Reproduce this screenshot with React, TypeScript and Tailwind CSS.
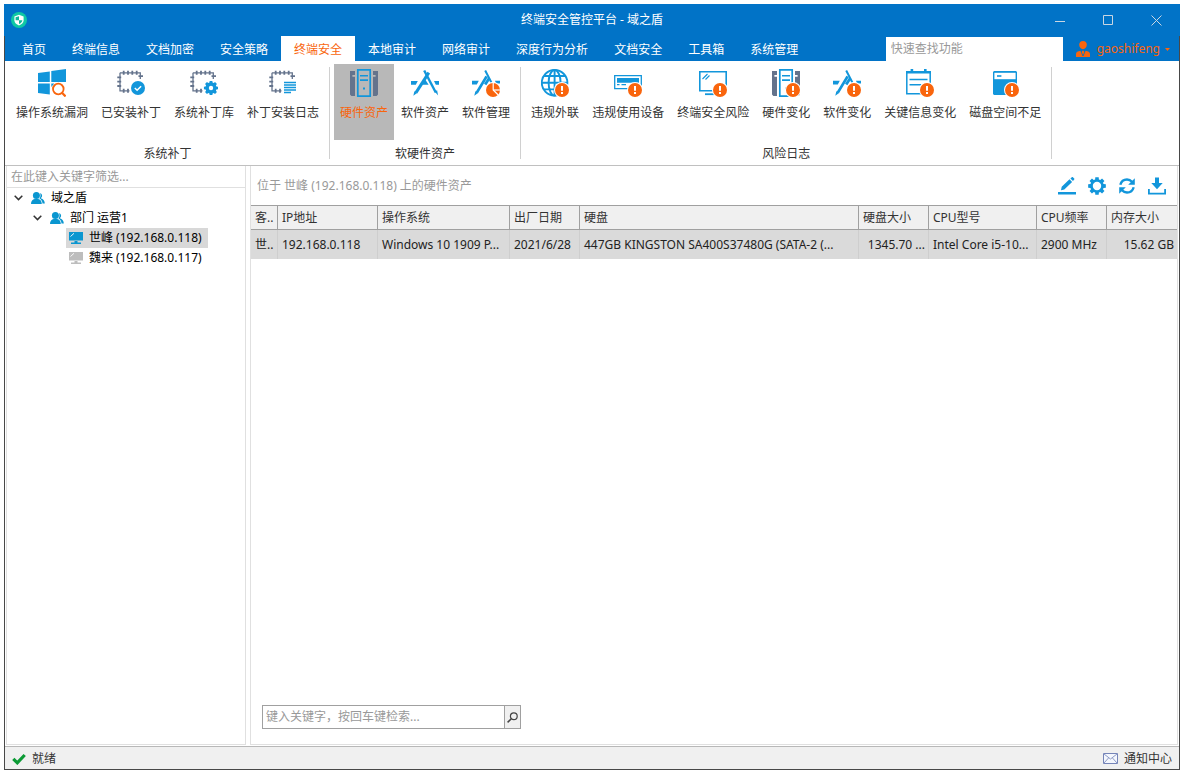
import type { ReactNode } from 'react';

const BLUE = '#1296db';
const GREY = '#64738c';
const ORANGE = '#f9650d';

/* ---------- Icon pieces ---------- */

const Icon = ({ children }: { children: ReactNode }) => (
  <svg viewBox="0 0 28 28" className="w-7 h-7" fill="none" aria-hidden="true">
    {children}
  </svg>
);

const AlertBadge = () => (
  <>
    <circle cx="21" cy="21" r="8" fill="#fff" />
    <circle cx="21" cy="21" r="7" fill={ORANGE} />
    <path d="M20 17h2v4.7h-2zM20 23h2v1.9h-2z" fill="#fff" />
  </>
);

const gearPath = (cx: number, cy: number, r: number, inner: number) => {
  const points: string[] = [];
  for (let i = 0; i < 8; i++) {
    const base = (i * Math.PI) / 4;
    [[-0.28, inner], [-0.19, r], [0.19, r], [0.28, inner]].forEach(([a, d]) => {
      points.push(`${(cx + d * Math.cos(base + a)).toFixed(2)} ${(cy + d * Math.sin(base + a)).toFixed(2)}`);
    });
  }
  return `M${points.join('L')}Z`;
};

const Chip = ({ children }: { children: ReactNode }) => (
  <Icon>
    <path d="M3 3.8H23.3V10M3 3.8V21.8H12.5" stroke={GREY} strokeWidth="1.3" />
    <path
      d="M6.7 1.8v4M11 1.8v4M15.3 1.8v4M19.7 1.8v4M6.7 19.8v4M11 19.8v4M.3 8.3h3.9M.3 12.7h3.9M.3 17h3.9M21.5 7.2H26"
      stroke={GREY}
      strokeWidth="1.8"
    />
    {children}
  </Icon>
);

const Servers = () => (
  <>
    <path d="M0 2h5v4H2.4v1.8H5V27H1.4L0 25.6zM28 2h-5v4h2.6v1.8H23V27h3.6l1.4-1.4z" fill={GREY} />
    <path d="M7.8.8h12.4v26.4H7.8z" stroke={BLUE} strokeWidth="1.7" />
    <path d="M10 6h8v1.6h-8zM10 10.3h8v1.6h-8zM13 18.6h2v2h-2z" fill={BLUE} />
  </>
);

const Tools = () => (
  <>
    <path d="M0 12h6.8l-2 3.8H0zM23 12h5v3.8h-3.2zM13.6 9.5l4 6.3H10z" fill={BLUE} />
    <path d="M17.8 3.6L5 23.6" stroke={BLUE} strokeWidth="3" />
    <path d="M3.4 22.3l2.8 1.8-3.9 2.6z" fill={BLUE} />
    <path d="M13.2 1.5l11.6 22" stroke={BLUE} strokeWidth="2.4" />
    <path d="M23.6 22.4l2.5-1.2 1 5.4z" fill={BLUE} />
  </>
);

const CutTools = () => (
  <>
    <path d="M0 11.8h6.8l-2 3.8H0zM23 11.8h5v2.6h-4z" fill={BLUE} />
    <path d="M14.6 7.4L4.8 23.6M17.2 9.2l-4 6.4" stroke={BLUE} strokeWidth="2.8" />
    <path d="M3.3 22.3l2.8 1.8-3.8 2.7z" fill={BLUE} />
    <path d="M13.2 1.5l6.2 12" stroke={BLUE} strokeWidth="2" />
  </>
);

const WindowsSearch = () => (
  <Icon>
    <path d="M0 3.9L11.8 2.5V13H0zM13.3 2.1L28 0v13H13.3zM0 14.6h11.8v10.8L0 24.1zM13.3 14.6h3l-3 3.4z" fill={BLUE} />
    <circle cx="20.3" cy="20" r="5.3" stroke={ORANGE} strokeWidth="1.8" />
    <path d="M24 23.8l3.6 3.7" stroke={ORANGE} strokeWidth="2.2" />
  </Icon>
);

const ChipCheck = () => (
  <Chip>
    <circle cx="21" cy="19" r="7" fill={BLUE} />
    <path d="M17.8 19l2.3 2.2 4-4" stroke="#fff" strokeWidth="1.5" />
  </Chip>
);

const ChipGear = () => (
  <Chip>
    <path d={gearPath(21, 19, 7.2, 5.6)} fill={BLUE} />
    <circle cx="21" cy="19" r="2.2" fill="#fff" />
  </Chip>
);

const ChipList = () => (
  <Chip>
    <path d="M15 13.5h12M15 16h12M15 18.5h12M15 21h12M15 23.5h7" stroke={BLUE} strokeWidth="1.4" />
  </Chip>
);

const Hardware = () => (
  <Icon>
    <Servers />
  </Icon>
);

const Software = () => (
  <Icon>
    <Tools />
  </Icon>
);

const SoftwareManage = () => (
  <Icon>
    <CutTools />
    <circle cx="21" cy="21" r="8" fill="#fff" />
    <circle cx="21" cy="21" r="7" fill={ORANGE} />
    <path d="M21.2 14v7l5 5" stroke="#fff" strokeWidth="1.2" />
    <path d="M21.2 21H28" stroke="#fff" strokeWidth="1.2" />
  </Icon>
);

const Globe = () => (
  <Icon>
    <g stroke={BLUE} strokeWidth="1.9">
      <circle cx="13.6" cy="13.8" r="12.8" />
      <ellipse cx="13.6" cy="13.8" rx="6" ry="12.8" />
      <path d="M13.6 1v25.6M1 13.8h25.2M3 7h21.2M3 20.4h21.2" />
    </g>
    <AlertBadge />
  </Icon>
);

const Device = () => (
  <Icon>
    <path d="M.7 6.7h26.6v13H.7z" stroke={BLUE} strokeWidth="1.3" />
    <path d="M3 9h22v4.8H3zM3 15h2.5v1.2H3zM7.5 15H12v1.2H7.5z" fill={BLUE} />
    <AlertBadge />
  </Icon>
);

const Screen = () => (
  <Icon>
    <path d="M.8 2.8h26.4v19H.8z" stroke={BLUE} strokeWidth="1.6" />
    <path d="M3.5 10l5-5M6.5 10.5l4-4" stroke={BLUE} strokeWidth="1.1" />
    <path d="M6 25.2h9" stroke={BLUE} strokeWidth="1.8" />
    <AlertBadge />
  </Icon>
);

const HardwareChange = () => (
  <Icon>
    <Servers />
    <AlertBadge />
  </Icon>
);

const SoftwareChange = () => (
  <Icon>
    <CutTools />
    <AlertBadge />
  </Icon>
);

const Calendar = () => (
  <Icon>
    <path d="M.8 2.8h23.4v22H.8z" stroke={BLUE} strokeWidth="1.5" />
    <path d="M0 2h25v2.6H0zM4.6 0h2.6v3H4.6zM18 0h2.6v3H18z" fill={BLUE} />
    <path d="M3.5 10.5h18M3.5 15.8h12" stroke={BLUE} strokeWidth="1.4" />
    <AlertBadge />
  </Icon>
);

const Disk = () => (
  <Icon>
    <path d="M3 2h22l1 1v23H3l-1-1V3z" fill={BLUE} />
    <path d="M3.4 3.8h21.2v6.4H3.4z" fill="#fff" />
    <path d="M6 6.2h4.4v1.6H6z" fill={BLUE} />
    <AlertBadge />
  </Icon>
);

const People = () => (
  <svg viewBox="0 0 14 14" className="w-3.5 h-3.5 shrink-0" fill="#0a96d0" aria-hidden="true">
    <circle cx="5.4" cy="4.4" r="3.5" />
    <path d="M0 13c0-3 1.600-4.800 3.600-5h3.600c2 .2 3.600 2 3.600 5z" />
    <path d="M9 2.300c2.600.4 2.700 3.600.8 4.900 2.600.9 4 2.800 4 5.300h-2.300c-.1-2.400-1.300-4.100-3-5 1.100-1.400 1.300-3.500.5-5.200z" />
  </svg>
);

const Monitor = ({ color }: { color: string }) => (
  <svg viewBox="0 0 14 12" className="w-3.5 h-3 shrink-0" aria-hidden="true">
    <path d="M0 0h14v8.400H0zM5.500 9h3v1.400h-3zM2 10.400h10V12H2z" fill={color} />
    <path d="M1.500 4.500L5 1.300" stroke="#fff" strokeWidth=".9" />
  </svg>
);

const Chevron = () => (
  <svg viewBox="0 0 9 6" className="w-[9px] h-1.5" fill="none" aria-hidden="true">
    <path d="M.7.8l3.800 3.800L8.300.8" stroke="#333" strokeWidth="1.500" />
  </svg>
);

/* ---------- Data ---------- */

const tabs = ['首页', '终端信息', '文档加密', '安全策略', '终端安全', '本地审计', '网络审计', '深度行为分析', '文档安全', '工具箱', '系统管理'];

const groups = [
  {
    title: '系统补丁',
    items: [
      { label: '操作系统漏洞', icon: <WindowsSearch /> },
      { label: '已安装补丁', icon: <ChipCheck /> },
      { label: '系统补丁库', icon: <ChipGear /> },
      { label: '补丁安装日志', icon: <ChipList /> },
    ],
  },
  {
    title: '软硬件资产',
    items: [
      { label: '硬件资产', icon: <Hardware /> },
      { label: '软件资产', icon: <Software /> },
      { label: '软件管理', icon: <SoftwareManage /> },
    ],
  },
  {
    title: '风险日志',
    items: [
      { label: '违规外联', icon: <Globe /> },
      { label: '违规使用设备', icon: <Device /> },
      { label: '终端安全风险', icon: <Screen /> },
      { label: '硬件变化', icon: <HardwareChange /> },
      { label: '软件变化', icon: <SoftwareChange /> },
      { label: '关键信息变化', icon: <Calendar /> },
      { label: '磁盘空间不足', icon: <Disk /> },
    ],
  },
];

const columns = [
  { title: '客..', value: '世..', width: 'w-[27px]' },
  { title: 'IP地址', value: '192.168.0.118', width: 'w-[100px]' },
  { title: '操作系统', value: 'Windows 10 1909 P...', width: 'w-[132px]' },
  { title: '出厂日期', value: '2021/6/28', width: 'w-[70px]' },
  { title: '硬盘', value: '447GB KINGSTON SA400S37480G (SATA-2 (...', width: '' },
  { title: '硬盘大小', value: '1345.70 ...', width: 'w-[70px]', right: true },
  { title: 'CPU型号', value: 'Intel Core i5-10...', width: 'w-[108px]' },
  { title: 'CPU频率', value: '2900 MHz', width: 'w-[70px]' },
  { title: '内存大小', value: '15.62 GB', width: 'w-[70px]', right: true },
];

/* ---------- Sections ---------- */

const TitleBar = () => (
  <header className="h-8 shrink-0 grid grid-cols-3 items-center bg-[#0173c7] text-white">
    <svg viewBox="0 0 16 16" className="w-4 h-4 ml-[7px]" aria-hidden="true">
      <circle cx="8" cy="8" r="8" fill="#0fc8a4" />
      <path d="M8 2.800l4.600 1.600v3.800c0 2.600-2 4.300-4.600 5.200-2.600-.9-4.600-2.600-4.600-5.200V4.400z" fill="#fff" />
      <path d="M8 4.200v4H4.600v-3zM8 8.200h3.400c-.2 1.900-1.600 3-3.400 3.800z" fill="#0fb89a" />
    </svg>
    <h1 className="text-center">终端安全管控平台 - 域之盾</h1>
    <div className="flex justify-end h-full">
      <button aria-label="最小化" className="w-12 flex items-center justify-center">
        <svg viewBox="0 0 11 11" className="w-[11px] h-[11px]" stroke="#c9d6e2" fill="none"><path d="M0 6.500h10" /></svg>
      </button>
      <button aria-label="最大化" className="w-12 flex items-center justify-center">
        <svg viewBox="0 0 11 11" className="w-[11px] h-[11px]" stroke="#c9d6e2" fill="none"><path d="M.5.5h9v9h-9z" /></svg>
      </button>
      <button aria-label="关闭" className="w-12 flex items-center justify-center">
        <svg viewBox="0 0 11 11" className="w-[11px] h-[11px]" stroke="#c9d6e2" fill="none"><path d="M.5.5l10 10M10.500.5l-10 10" /></svg>
      </button>
    </div>
  </header>
);

const TabStrip = () => (
  <nav className="h-[25px] shrink-0 flex bg-[#0173c7] pl-1">
    {tabs.map((tab) => (
      <button
        key={tab}
        className={tab === '终端安全' ? 'px-[13px] pt-0.5 bg-white text-[#f9650d]' : 'px-[13px] pt-0.5 text-white'}
      >
        {tab}
      </button>
    ))}
    <input
      aria-label="快速查找功能"
      placeholder="快速查找功能"
      className="ml-auto mt-px w-[177px] bg-white px-[5px] outline-none placeholder:text-[#999]"
    />
    <button className="flex items-center pl-[13px] pr-[9px] pt-px text-[#f9650d]">
      <svg viewBox="0 0 14 16" className="w-3.5 h-4 mr-[7px]" fill="#f9650d" aria-hidden="true">
        <path d="M7 0c2.400 0 3.800 1.600 3.800 3.800 0 2.400-1.600 4.400-3.800 4.400S3.200 6.200 3.200 3.800C3.200 1.600 4.600 0 7 0z" />
        <path d="M0 16v-3.200c0-1.600 1.800-2.600 4.400-3L6.500 15h1l2.100-5.200c2.600.4 4.400 1.400 4.400 3V16zM6.200 9.800h1.600l.5 1.500L7 14l-1.300-2.700z" />
      </svg>
      <span>gaoshifeng</span>
      <svg viewBox="0 0 5 3" className="w-[5px] h-[3px] ml-[5px]" fill="#f9650d" aria-hidden="true"><path d="M0 0h5L2.500 3z" /></svg>
    </button>
  </nav>
);

const Ribbon = () => (
  <div className="h-[105px] shrink-0 flex bg-white border-b border-[#c0c0c0] pl-px">
    {groups.map((group) => (
      <section key={group.title} className="flex">
        <div className="flex flex-col px-1 pt-[3px]">
          <div className="flex gap-px">
            {group.items.map((item) => (
              <button
                key={item.label}
                className={
                  item.label === '硬件资产'
                    ? 'h-[76px] px-1.5 pt-[5px] flex flex-col items-center gap-2 bg-[#b8b8b8] text-[#f9650d]'
                    : 'h-[76px] px-1.5 pt-[5px] flex flex-col items-center gap-2'
                }
              >
                {item.icon}
                {item.label}
              </button>
            ))}
          </div>
          <h2 className="text-center mt-1.5">{group.title}</h2>
        </div>
        <div className="w-px my-1.5 bg-[#d0d0d0]" />
      </section>
    ))}
  </div>
);

const Sidebar = () => (
  <aside className="w-60 shrink-0 border border-t-0 border-[#e0e0e0] text-black">
    <input
      aria-label="筛选"
      placeholder="在此键入关键字筛选..."
      className="block w-full h-[22px] px-1 border-b border-[#e0e0e0] outline-none placeholder:text-[#999]"
    />
    <ul>
      <li>
        <div className="h-5 flex items-center pl-[7px]">
          <Chevron />
          <span className="ml-2 flex items-center gap-1.5"><People />域之盾</span>
        </div>
        <ul>
          <li>
            <div className="h-5 flex items-center pl-[26px]">
              <Chevron />
              <span className="ml-2 flex items-center gap-1.5"><People />部门 运营1</span>
            </div>
            <ul className="pl-[59px]">
              <li className="h-5 w-fit flex items-center gap-1.5 pl-[3px] pr-1.5 bg-[#d8d8d8]">
                <Monitor color="#0a96d0" />世峰 (192.168.0.118)
              </li>
              <li className="h-5 w-fit flex items-center gap-1.5 pl-[3px] pr-1.5">
                <Monitor color="#bdbdbd" />魏来 (192.168.0.117)
              </li>
            </ul>
          </li>
        </ul>
      </li>
    </ul>
  </aside>
);

const Toolbar = () => (
  <div className="h-[39px] flex items-center justify-between pl-1.5 pr-[11px]">
    <h2 className="text-[#999]">位于 世峰 (192.168.0.118) 上的硬件资产</h2>
    <div className="flex gap-3 pt-px">
      <button aria-label="编辑">
        <svg viewBox="0 0 18 18" className="w-[18px] h-[18px]" fill={BLUE}>
          <path d="M0 15h18v2.600H0zM3 13.200l.7-3.400 7.800-7.500 2.600 2.700-7.800 7.500zM12.400 1.500L13.800.2c.4-.3.8-.2 1.100 0l1.300 1.400c.3.3.3.7 0 1L15 4z" />
        </svg>
      </button>
      <button aria-label="设置">
        <svg viewBox="0 0 18 18" className="w-[18px] h-[18px]">
          <path d={gearPath(9, 9, 9, 6.8) + 'M9 4.800a4.200 4.200 0 1 0 0 8.400a4.200 4.200 0 1 0 0-8.400z'} fill={BLUE} fillRule="evenodd" />
        </svg>
      </button>
      <button aria-label="刷新">
        <svg viewBox="0 0 18 18" className="w-[18px] h-[18px]" fill="none" stroke={BLUE} strokeWidth="2.400">
          <path d="M2.300 7.800C3.200 4.600 5.700 2.500 9 2.500c2 0 3.700.8 5 2.200M15.700 10.200C14.800 13.400 12.300 15.500 9 15.500c-2 0-3.700-.8-5-2.200" />
          <path d="M16.800 1.200v6.600h-6.600zM1.200 16.800v-6.600h6.600z" fill={BLUE} stroke="none" />
        </svg>
      </button>
      <button aria-label="导出">
        <svg viewBox="0 0 18 18" className="w-[18px] h-[18px]" fill={BLUE}>
          <path d="M7 .5h4V6h3.700L9 12.200 3.300 6H7zM0 12h1.800v3.700h14.400V12H18v5.600H0z" />
        </svg>
      </button>
    </div>
  </div>
);

const AssetTable = () => (
  <table className="w-full table-fixed border-separate border-spacing-0 whitespace-nowrap">
    <thead>
      <tr className="h-[25px] bg-[#f0f0f0]">
        {columns.map((col) => (
          <th
            key={col.title}
            className={`${col.width} px-1 py-0 text-left font-normal overflow-hidden border-y border-r border-[#a0a0a0] last:border-r-0`}
          >
            {col.title}
          </th>
        ))}
      </tr>
    </thead>
    <tbody>
      <tr className="h-[29px] bg-[#dadada] text-[#222]">
        {columns.map((col) => (
          <td
            key={col.title}
            className={`${col.right ? 'text-right pr-[3px]' : 'text-left'} pl-1 py-0 overflow-hidden border-r border-[#cecece] last:border-r-0`}
          >
            {col.value}
          </td>
        ))}
      </tr>
    </tbody>
  </table>
);

const StatusBar = () => (
  <footer className="h-[23px] pt-px shrink-0 flex items-center justify-between bg-[#f0f0f0] border-t border-[#b8b8b8] px-[7px]">
    <span className="flex items-center gap-1.5">
      <svg viewBox="0 0 14 12" className="w-3.5 h-3" fill="none" aria-hidden="true">
        <path d="M1.300 5.800l4 4L12.700 2" stroke="#0c9a35" strokeWidth="3.200" />
      </svg>
      就绪
    </span>
    <button className="flex items-center gap-1.5">
      <svg viewBox="0 0 15 11" className="w-[15px] h-[11px]" aria-hidden="true">
        <path d="M.5.5h14v10H.5z" fill="#f4f7fd" stroke="#7584b8" />
        <path d="M1 1l6.500 5L14 1M1 10l4.500-5M14 10L9.500 5" fill="none" stroke="#8d9ac6" />
      </svg>
      通知中心
    </button>
  </footer>
);

const App = () => (
  <div className="h-screen p-1 bg-white">
    <div className="h-full flex flex-col bg-white text-[#333] text-[12px] leading-4 font-['Noto_Sans','Noto_Sans_CJK_SC',sans-serif]">
      <TitleBar />
      <div className="flex-1 min-h-0 flex flex-col border border-t-0 border-[#484848]">
        <TabStrip />
        <Ribbon />
        <div className="flex-1 min-h-0 flex gap-1 px-px pb-px">
          <Sidebar />
          <main className="flex-1 min-w-0 flex flex-col border border-t-0 border-[#e0e0e0]">
            <Toolbar />
            <AssetTable />
            <form className="mt-auto mb-[15px] ml-[11px] w-[259px] h-6 flex border border-[#a0a0a0]">
              <input
                aria-label="检索"
                placeholder="键入关键字，按回车键检索..."
                className="flex-1 min-w-0 px-[3px] outline-none placeholder:text-[#999]"
              />
              <button type="button" aria-label="搜索" className="w-4 border-l border-[#a0a0a0] bg-[#f0f0f0] flex items-center justify-center">
                <svg viewBox="0 0 11 11" className="w-[11px] h-[11px]" fill="none" stroke="#444">
                  <circle cx="6.800" cy="4.200" r="3.400" strokeWidth="1.200" />
                  <path d="M4.400 6.600L.6 10.400" strokeWidth="1.500" />
                </svg>
              </button>
            </form>
          </main>
        </div>
        <StatusBar />
      </div>
    </div>
  </div>
);

export default App;
